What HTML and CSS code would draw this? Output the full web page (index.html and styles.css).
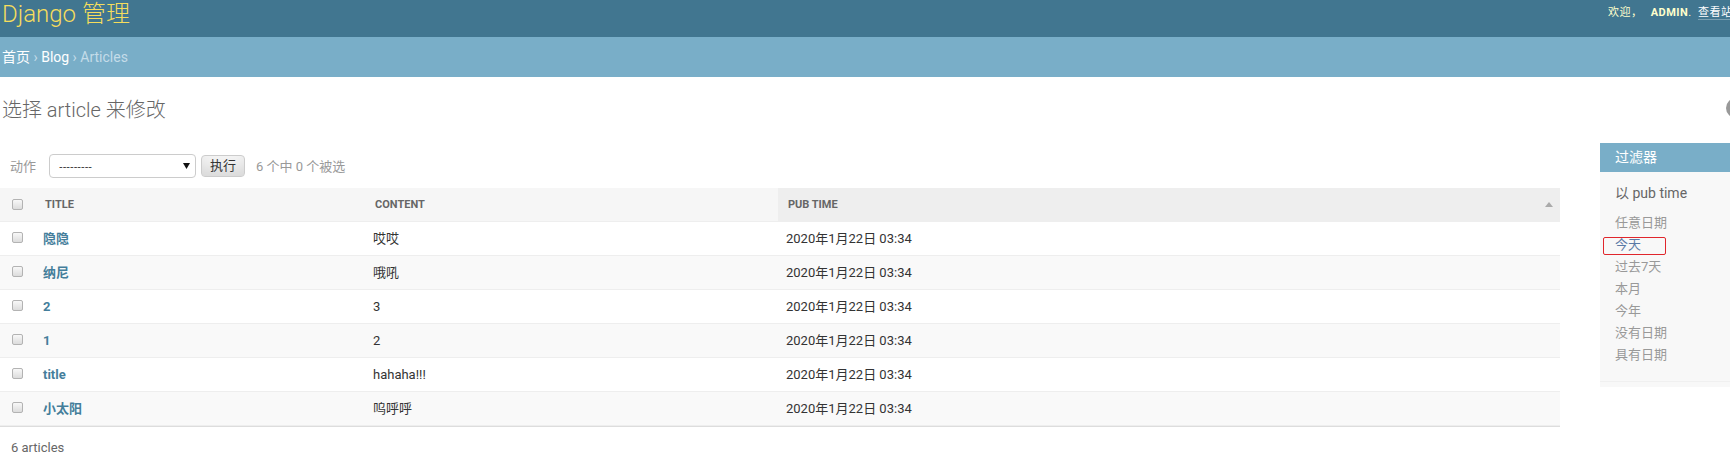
FILE: index.html
```html
<!DOCTYPE html>
<html lang="zh-CN">
<head>
<meta charset="utf-8">
<title>选择 article 来修改 | Django 站点管理员</title>
<link rel="stylesheet" href="styles.css">
</head>
<body>
<div class="page">
  <header class="header">
    <h1 class="brand">Django 管理</h1>
    <div class="user-tools">欢迎， <strong>admin</strong>. <a class="first" href="#">查看站点</a> / <a href="#">修改密码</a> / <a href="#">注销</a></div>
  </header>
  <nav class="breadcrumbs"><a href="#">首页</a> › <a href="#">Blog</a> › Articles</nav>
  <main class="content">
    <div class="title-row">
      <h1 class="page-title">选择 article 来修改</h1>
      <a class="addlink" href="#">增加 article <svg class="plus" width="10" height="10" viewBox="0 0 10 10"><path d="M4 0h2v4h4v2H6v4H4V6H0V4h4z" fill="#fff"/></svg></a>
    </div>
    <div class="changelist">
      <div class="results">
        <div class="actions">
          <span class="actions-label">动作</span>
          <span class="select"><span>---------</span><svg width="7" height="6" viewBox="0 0 7 6"><path d="M0 0h7L3.5 6z" fill="#111"/></svg></span>
          <button class="go" type="button">执行</button>
          <span class="counter">6 个中 0 个被选</span>
        </div>
        <table class="results-table">
          <colgroup>
            <col class="c-check">
            <col class="c-title">
            <col class="c-content">
            <col>
          </colgroup>
          <thead>
            <tr>
              <th class="check-col"><input class="cb" type="checkbox"></th>
              <th>Title</th>
              <th>Content</th>
              <th class="sorted"><div class="sorted-inner"><span>Pub time</span><svg width="8" height="5" viewBox="0 0 8 5"><path d="M4 0L8 5H0z" fill="#aaa"/></svg></div></th>
            </tr>
          </thead>
          <tbody>
            <tr class="row1"><td class="check-col"><input class="cb" type="checkbox"></td><th><a href="#">隐隐</a></th><td>哎哎</td><td>2020年1月22日 03:34</td></tr>
            <tr class="row2"><td class="check-col"><input class="cb" type="checkbox"></td><th><a href="#">纳尼</a></th><td>哦吼</td><td>2020年1月22日 03:34</td></tr>
            <tr class="row1"><td class="check-col"><input class="cb" type="checkbox"></td><th><a href="#">2</a></th><td>3</td><td>2020年1月22日 03:34</td></tr>
            <tr class="row2"><td class="check-col"><input class="cb" type="checkbox"></td><th><a href="#">1</a></th><td>2</td><td>2020年1月22日 03:34</td></tr>
            <tr class="row1"><td class="check-col"><input class="cb" type="checkbox"></td><th><a href="#">title</a></th><td>hahaha!!!</td><td>2020年1月22日 03:34</td></tr>
            <tr class="row2"><td class="check-col"><input class="cb" type="checkbox"></td><th><a href="#">小太阳</a></th><td>呜呼呼</td><td>2020年1月22日 03:34</td></tr>
          </tbody>
        </table>
        <p class="paginator">6 articles</p>
      </div>
      <aside class="filter">
        <h2>过滤器</h2>
        <h3>以 pub time</h3>
        <ul>
          <li><a href="#">任意日期</a></li>
          <li class="marked"><a class="hl" href="#">今天</a><span class="mark"></span></li>
          <li><a href="#">过去7天</a></li>
          <li><a href="#">本月</a></li>
          <li><a href="#">今年</a></li>
          <li><a href="#">没有日期</a></li>
          <li><a href="#">具有日期</a></li>
        </ul>
      </aside>
    </div>
  </main>
</div>
</body>
</html>
```

FILE: styles.css
```css
* { box-sizing: border-box; }

html, body {
  margin: 0;
  padding: 0;
  overflow: hidden;
  background: #fff;
}

body {
  width: 1730px;
  height: 459px;
  font-family: Roboto, "Noto Sans CJK SC", sans-serif;
  font-size: 14px;
  color: #333;
}

.page { width: 1840px; }

a { text-decoration: none; }

/* Header */
.header {
  display: flex;
  justify-content: space-between;
  align-items: flex-start;
  height: 37px;
  background: #417690;
  color: #ffc;
}

.brand {
  margin: 0 0 0 2px;
  font-size: 24px;
  line-height: 28px;
  font-weight: 300;
  color: #f5dd5d;
}

.user-tools {
  margin-top: 6px;
  padding-right: 4px;
  font-size: 11px;
  line-height: 14px;
  letter-spacing: 0.5px;
  text-transform: uppercase;
  white-space: nowrap;
}

.user-tools strong { font-weight: 700; margin-left: 5px; }

.user-tools a {
  color: #fff;
  border-bottom: 1px solid rgba(255, 255, 255, 0.3);
}

.user-tools a.first { margin-left: 3px; }

/* Breadcrumbs */
.breadcrumbs {
  height: 40px;
  padding: 10px 0 10px 2px;
  background: #79aec8;
  color: #c4dce8;
  font-size: 14px;
  line-height: 20px;
}

.breadcrumbs a { color: #fff; }

/* Content */
.content { padding-top: 20px; }

.title-row {
  display: flex;
  justify-content: space-between;
  align-items: flex-start;
  margin-bottom: 20px;
}

.page-title {
  margin: 0 0 0 2px;
  font-size: 20px;
  line-height: 26px;
  font-weight: 300;
  color: #666;
}

.addlink {
  display: flex;
  align-items: center;
  gap: 7px;
  margin-top: 1px;
  height: 20px;
  padding: 0 13px 0 12px;
  border-radius: 15px;
  background: #999;
  color: #fff;
  font-size: 11px;
  line-height: 14px;
  letter-spacing: 0.5px;
  text-transform: uppercase;
  white-space: nowrap;
}

.changelist {
  display: flex;
  align-items: flex-start;
  gap: 40px;
}

.results { flex: 0 0 1560px; width: 1560px; }

/* Actions */
.actions {
  display: flex;
  align-items: center;
  height: 45px;
  padding: 0 10px;
  color: #999;
  font-size: 13px;
}

.actions-label { margin-right: 13px; color: #999; }

.select {
  display: flex;
  align-items: center;
  justify-content: space-between;
  width: 147px;
  height: 24px;
  padding: 0 5px 0 9px;
  border: 1px solid #ccc;
  border-radius: 4px;
  background: #fff;
  color: #333;
  font: 11px/14px "Liberation Sans", sans-serif;
}

.go {
  margin: 0 0 0 5px;
  height: 22px;
  padding: 0 8px;
  border: 1px solid #ccc;
  border-radius: 4px;
  background: #f5f5f5;
  box-shadow: inset 0 -15px 20px -10px rgba(0, 0, 0, 0.15);
  color: #333;
  font: 13px/20px Roboto, "Noto Sans CJK SC", sans-serif;
}

.counter { margin-left: 11px; color: #999; }

/* Table */
.results-table {
  width: 1560px;
  border-collapse: collapse;
  table-layout: fixed;
}

.c-check { width: 35px; }
.c-title { width: 330px; }
.c-content { width: 413px; }

.results-table th,
.results-table td {
  padding: 8px;
  font-size: 13px;
  line-height: 17px;
  text-align: left;
  vertical-align: top;
  border-bottom: 1px solid #eee;
}

.results-table thead th {
  padding: 8px 10px;
  background: #f6f6f6;
  color: #666;
  font-size: 11px;
  font-weight: 700;
  text-transform: uppercase;
  vertical-align: middle;
  white-space: nowrap;
}

.results-table thead th.sorted { background: #eee; padding-right: 7px; }

.sorted-inner {
  display: flex;
  justify-content: space-between;
  align-items: center;
}

.results-table .check-col,
.results-table thead th.check-col {
  padding-left: 0;
  padding-right: 0;
}

.results-table tbody th { font-weight: 700; }
.results-table tbody th a { color: #447e9b; }

.row1 { background: #fff; }
.row2 { background: #f9f9f9; }

.cb {
  -webkit-appearance: none;
  appearance: none;
  display: block;
  width: 11px;
  height: 11px;
  margin: 2px auto 0;
  border: 1px solid #b3b3b3;
  border-radius: 2px;
  background: linear-gradient(#f8f8f8, #dcdcdc);
}

thead .cb { margin: 0 auto; }

.paginator {
  margin: 0;
  padding: 10px 0 10px 11px;
  border-top: 1px solid #ddd;
  color: #666;
  font-size: 13px;
  line-height: 22px;
}

/* Filter */
.filter {
  flex: 0 0 240px;
  width: 240px;
  background: #f8f8f8;
}

.filter h2 {
  margin: 0 0 12px;
  padding: 5px 15px;
  background: #79aec8;
  color: #fff;
  font-size: 14px;
  line-height: 19px;
  font-weight: 400;
}

.filter h3 {
  margin: 0 0 10px;
  padding: 0 15px;
  color: #666;
  font-size: 14px;
  line-height: 18px;
  font-weight: 400;
}

.filter ul {
  margin: 0 0 5px;
  padding: 0 15px 15px;
  list-style: none;
  border-bottom: 1px solid #f0f0f0;
}

.filter li {
  padding: 1px 0;
  font-size: 13px;
  line-height: 20px;
  color: #999;
}

.filter li a { display: block; color: #999; }
.filter li a.hl { color: #5b7aa6; }

.marked { position: relative; }

.mark {
  position: absolute;
  left: -12px;
  top: 3px;
  width: 63px;
  height: 18px;
  border: 1px solid #e0262c;
  border-radius: 2px;
}
```
